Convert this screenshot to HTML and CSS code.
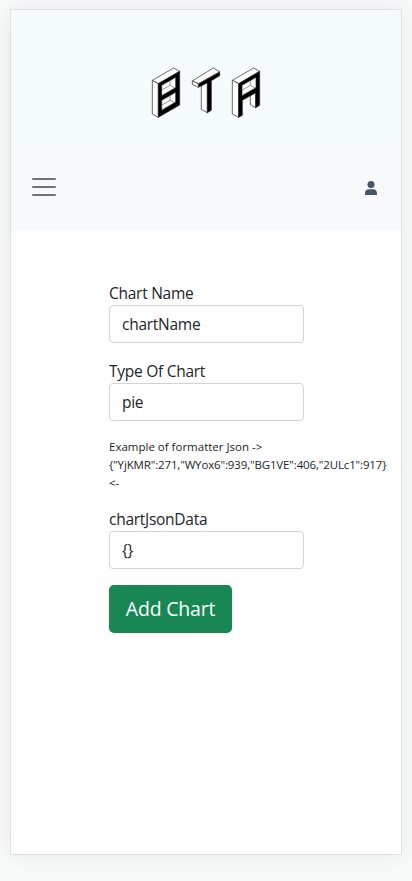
FILE: index.html
```html
<!DOCTYPE html>
<html lang="en">
<head>
<meta charset="utf-8">
<title>BTA</title>
<link rel="stylesheet" href="styles.css">
</head>
<body>
<div class="card">
  <header class="brand">
    <svg class="logo" viewBox="0 0 405 225" role="img" aria-label="BTA">
      <g stroke="#222" stroke-width="2" stroke-linejoin="round" fill="#fff">
        <path d="M37 76L101 39L119 49L55 86Z"/>
        <path d="M37 76L55 86V187L37 177Z"/>
        <path fill="#000" d="M55 86L119 49V150L55 187Z"/>
        <path d="M65 91L107 67V98L65 122Z"/>
        <path d="M65 136L107 112V141L65 166Z"/>
        <path fill="none" stroke="#666" d="M90 78V91L66 105M90 91L105 99M90 123V136L66 150M90 136L105 143"/>
        <path d="M184 92L202 82V173L184 163Z"/>
        <path fill="#000" d="M175 86L239 50V62L214 77V166L202 173V83L175 97Z"/>
        <path d="M157 78L220 39L239 50L175 86Z"/>
        <path d="M157 78L175 86V97L157 88Z"/>
        <path d="M331 122L347 113V158L331 149Z"/>
        <path d="M277 76L341 39L359 49L296 86Z"/>
        <path d="M277 76L296 86V187L277 177Z"/>
        <path fill="#000" d="M296 86L359 49V151L347 158V113L307 136V181L296 187Z"/>
        <path d="M306 91L348 67V98L306 122Z"/>
        <path fill="none" stroke="#666" d="M331 78V91L307 105M331 91L346 99"/>
      </g>
    </svg>
  </header>
  <nav class="navbar">
    <svg class="menu" viewBox="0 0 30 30"><path d="M4 7h22M4 15h22M4 23h22"/></svg>
    <svg class="user" viewBox="0 0 12 14"><circle cx="6" cy="3.5" r="3.5"/><path d="M0 14V12.5Q0 8.2 4.2 8.2H7.8Q12 8.2 12 12.5V14Z"/></svg>
  </nav>
  <form class="form">
    <label for="name">Chart Name</label>
    <input id="name" type="text" value="chartName">
    <label for="type">Type Of Chart</label>
    <input id="type" type="text" value="pie">
    <p class="example">Example of formatter Json -&gt;<br><span class="json">{"YjKMR":271,"WYox6":939,"BG1VE":406,"2ULc1":917}</span><br>&lt;-</p>
    <label for="data">chartJsonData</label>
    <input id="data" type="text" value="{}">
    <button type="button">Add Chart</button>
  </form>
</div>
</body>
</html>
```
FILE: styles.css
```css
* { box-sizing: border-box; }
body {
  margin: 0;
  padding: 9px 10px 26px;
  height: 881px;
  overflow: hidden;
  background: #f8faf9;
  color: #212529;
  font: 15.5px/24px "Open Sans", "Noto Sans", sans-serif;
  letter-spacing: -.27px;
}
.card {
  height: 846px;
  border: 1px solid #dfe1e1;
  background: #fff;
  box-shadow: 0 0 20px rgba(0, 0, 0, .07);
}
.brand {
  height: 132px;
  padding: 45px 0 0 129px;
  background: #f5fafd;
}
.logo { display: block; width: 135px; height: 75px; }
.navbar {
  display: flex;
  justify-content: space-between;
  align-items: center;
  height: 89px;
  padding: 0 24px 0 18px;
  background: #f8f9fb;
}
.menu { width: 30px; height: 30px; fill: none; stroke: #717273; stroke-width: 2; stroke-linecap: round; }
.user { width: 12px; height: 14px; margin-top: 3px; fill: #475569; }
.form {
  display: flex;
  flex-direction: column;
  align-items: flex-start;
  padding: 50px 0 0 98px;
}
label { white-space: nowrap; }
input {
  width: 195px;
  height: 38px;
  margin: 0 0 16px;
  padding: 6px 12px;
  border: 1px solid #ced4da;
  border-radius: 4px;
  background: #fff;
  color: #212529;
  font: inherit;
  letter-spacing: inherit;
}
.example {
  margin: 1px 0 15px;
  font-size: 11.5px;
  line-height: 18px;
  letter-spacing: 0;
  white-space: nowrap;
}
.json { letter-spacing: -.14px; }
button {
  width: 123px;
  height: 48px;
  padding: 0;
  border: 0;
  border-radius: 5px;
  background: #198754;
  color: #fff;
  font: 19.5px/30px "Open Sans", "Noto Sans", sans-serif;
  letter-spacing: -.2px;
}
```
